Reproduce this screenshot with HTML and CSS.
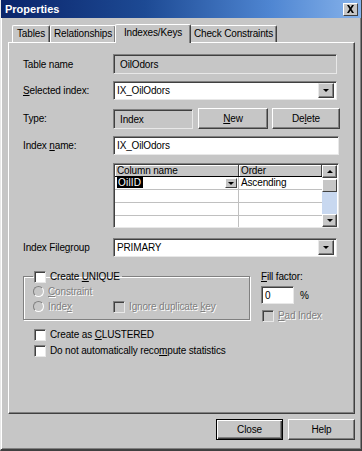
FILE: index.html
```html
<!DOCTYPE html>
<html>
<head>
<meta charset="utf-8">
<link rel="stylesheet" href="styles.css">
</head>
<body>
<div class="window">
  <div class="titlebar">
    <span class="title">Properties</span>
    <span class="tclose"><svg width="9" height="8" viewBox="0 0 9 8"><path d="M1 0h2l1.5 2.5L6 0h2L5.5 4 8 8H6L4.5 5.5 3 8H1l2.5-4z" fill="#000"/></svg></span>
  </div>
  <div class="body">
    <div class="tabs">
      <div class="tab t1">Tables</div>
      <div class="tab t2">Relationships</div>
      <div class="tab t3 active">Indexes/Keys</div>
      <div class="tab t4">Check Constraints</div>
    </div>
    <div class="panel">
      <div class="row r1">
        <div class="label">Table name</div>
        <div class="field disabled wide">OilOdors</div>
      </div>
      <div class="row r2">
        <div class="label"><u>S</u>elected index:</div>
        <div class="field combo wide"><span class="ctext">IX_OilOdors</span><span class="dd"><i></i></span></div>
      </div>
      <div class="row r3">
        <div class="label">Type:</div>
        <div class="field disabled type">Index</div>
        <div class="btn new"><span><u>N</u>ew</span></div>
        <div class="btn del"><span>De<u>l</u>ete</span></div>
      </div>
      <div class="row r4">
        <div class="label">Index <u>n</u>ame:</div>
        <div class="field wide2">IX_OilOdors</div>
      </div>
      <div class="row r5">
        <div class="label"></div>
        <div class="grid">
          <div class="gmain">
            <div class="ghead">
              <div class="gc c1">Column name</div>
              <div class="gc c2">Order</div>
            </div>
            <div class="grow">
              <div class="gc c1"><span class="sel">OilID</span><span class="mini"><i></i></span></div>
              <div class="gc c2">Ascending</div>
            </div>
            <div class="grow"><div class="gc c1"></div><div class="gc c2"></div></div>
            <div class="grow"><div class="gc c1"></div><div class="gc c2"></div></div>
            <div class="grow last"><div class="gc c1"></div><div class="gc c2"></div></div>
          </div>
          <div class="sbar">
            <div class="sbtn up"><i></i></div>
            <div class="thumb"></div>
            <div class="track"></div>
            <div class="sbtn down"><i></i></div>
          </div>
        </div>
      </div>
      <div class="row r6">
        <div class="label">Index File<u>g</u>roup</div>
        <div class="field combo wide"><span class="ctext">PRIMARY</span><span class="dd"><i></i></span></div>
      </div>
      <div class="row r7">
        <fieldset class="group">
          <legend><span class="cb"></span><span>Create <u>U</u>NIQUE</span></legend>
          <div class="opt dis"><span class="radio"></span><span><u>C</u>onstraint</span></div>
          <div class="opt dis two"><span class="ol"><span class="radio"></span><span>Inde<u>x</u></span></span><span class="cb disbox"></span><span>Ignore duplicate <u>k</u>ey</span></div>
        </fieldset>
        <div class="fill">
          <div class="flabel"><u>F</u>ill factor:</div>
          <div class="frow"><div class="field fnum">0</div><span class="pct">%</span></div>
          <div class="opt dis pad"><span class="cb disbox"></span><span><u>P</u>ad Index</span></div>
        </div>
      </div>
      <div class="opt chk c1st"><span class="cb"></span><span>Create as <u>C</u>LUSTERED</span></div>
      <div class="opt chk"><span class="cb"></span><span>Do not automatically reco<u>m</u>pute statistics</span></div>
    </div>
    <div class="footer">
      <div class="btn fbtn def">Close</div>
      <div class="btn fbtn">Help</div>
    </div>
  </div>
</div>
</body>
</html>
```
FILE: styles.css
```css
* { box-sizing: border-box; }
html, body { margin: 0; padding: 0; }
body {
  width: 362px; height: 451px; overflow: hidden;
  background: #c6c6c6;
  font-family: "Liberation Sans", Arial, sans-serif;
  font-size: 10px; letter-spacing: -0.15px; color: #000;
}
u { text-decoration: underline; }
.window {
  width: 362px; height: 451px;
  background: #c6c6c6;
  border-left: 1px solid #e8e8e8;
  border-right: 1px solid #404040;
  border-bottom: 2px solid #404040;
  display: flex; flex-direction: column;
  box-shadow: inset 1px 0 0 #fff, inset -1px 0 0 #808080, inset 0 -1px 0 #808080;
}
.titlebar {
  height: 18px; flex: none;
  background: linear-gradient(to right, #0a246a 0%, #1d4a94 40%, #4f86d2 75%, #86b2ea 100%);
  display: flex; align-items: center; justify-content: space-between;
  padding: 0 3px 0 4px;
}
.title { color: #fff; font-weight: bold; font-size: 11px; letter-spacing: 0; }
.tclose {
  width: 15px; height: 13px; background: #c6c6c6;
  border: 1px solid; border-color: #fff #404040 #404040 #fff;
  display: flex; align-items: center; justify-content: center;
}
.body { flex: 1; display: flex; flex-direction: column; padding: 6px 6px 0 7px; }
.tabs { display: flex; height: 18px; padding-left: 4px; align-items: flex-end; }
.tab {
  height: 17px; padding: 0; line-height: 15px; text-align: center;
  border-top: 1px solid #fff; border-left: 1px solid #fff;
  border-right: 1px solid #404040;
  box-shadow: inset -1px 0 0 #808080;
  border-radius: 2px 2px 0 0;
  white-space: nowrap;
}
.t1 { width: 38px; }
.t2 { width: 66px; }
.t3 { width: 76px; }
.t4 { width: 87px; }
.tab.active {
  height: 19px; margin: 0 -1px -1px -1px; position: relative; z-index: 1;
  background: #c6c6c6; line-height: 16px;
}
.panel {
  height: 372px; flex: none;
  border: 1px solid; border-color: #fff #404040 #404040 #fff;
  box-shadow: inset -1px -1px 0 #808080;
  padding: 11px 14px 0 14px;
  display: flex; flex-direction: column;
}
.row { display: flex; align-items: center; flex: none; }
.label { width: 90px; flex: none; white-space: nowrap; }
.field {
  height: 19px; background: #fff;
  border: 1px solid; border-color: #808080 #e8e8e8 #e8e8e8 #808080;
  box-shadow: inset 1px 1px 0 #404040;
  padding: 2px 3px 0 3px; line-height: 14px; white-space: nowrap;
}
.field.disabled { background: #c6c6c6; padding-left: 6px; padding-top: 3px; }
.wide { width: 224px; }
.wide2 { width: 226px; }
.r1 .field { height: 20px; }
.r2 { margin-top: 7px; }
.r3 { margin-top: 8px; }
.r4 { margin-top: 7px; }
.r5 { margin-top: 8px; align-items: flex-start; }
.r6 { margin-top: 10px; }
.combo { display: flex; justify-content: space-between; padding: 0 2px 0 3px; align-items: center; }
.dd {
  width: 16px; height: 15px; background: #c6c6c6;
  border: 1px solid; border-color: #e8e8e8 #404040 #404040 #e8e8e8;
  box-shadow: inset -1px -1px 0 #808080;
  display: flex; align-items: center; justify-content: center;
}
.dd i, .mini i, .sbtn.down i {
  width: 0; height: 0; border-left: 3px solid transparent; border-right: 3px solid transparent;
  border-top: 3px solid #000;
}
.sbtn.up i {
  width: 0; height: 0; border-left: 3px solid transparent; border-right: 3px solid transparent;
  border-bottom: 3px solid #000;
}
.type { width: 80px; height: 20px; }
.btn {
  height: 21px; background: #c6c6c6;
  border: 1px solid; border-color: #fff #404040 #404040 #fff;
  box-shadow: inset -1px -1px 0 #808080;
  display: flex; align-items: center; justify-content: center;
  white-space: nowrap;
}
.new { width: 70px; margin-left: 5px; }
.del { width: 68px; margin-left: 4px; }
.grid {
  width: 226px; height: 65px; display: flex;
  border: 1px solid; border-color: #808080 #e8e8e8 #e8e8e8 #808080;
  box-shadow: inset 1px 1px 0 #404040;
  background: #fff; padding: 1px 1px 0 1px;
}
.gmain { flex: 1; display: flex; flex-direction: column; }
.ghead { display: flex; height: 12px; background: #c6c6c6; border-bottom: 1px solid #000; }
.ghead .gc { line-height: 11px; padding-left: 2px; border-right: 1px solid #404040; box-shadow: inset 1px 1px 0 #fff; }
.c1 { width: 124px; flex: none; }
.c2 { flex: 1; }
.grow { display: flex; height: 13px; border-bottom: 1px solid #c0c0c0; }
.grow.last { border-bottom: none; flex: 1; }
.grow .gc { border-right: 1px solid #c0c0c0; padding-left: 2px; line-height: 12px; position: relative; }
.grow .c2 { border-right: none; }
.sel { background: #000; color: #fff; padding: 0 2px 0 1px; letter-spacing: 0.2px; }
.mini {
  position: absolute; right: 1px; top: 1px;
  width: 12px; height: 10px; background: #c6c6c6;
  border: 1px solid; border-color: #fff #404040 #404040 #fff;
  display: flex; align-items: center; justify-content: center;
}
.sbar { width: 15px; display: flex; flex-direction: column; }
.sbtn {
  height: 13px; background: #c6c6c6;
  border: 1px solid; border-color: #fff #404040 #404040 #fff;
  box-shadow: inset -1px -1px 0 #808080;
  display: flex; align-items: center; justify-content: center;
}
.thumb {
  height: 13px; background: #c6c6c6; margin-top: 1px;
  border: 1px solid; border-color: #fff #404040 #404040 #fff;
}
.track { flex: 1; background: #c8d8f0; }
.r7 { margin-top: 13px; align-items: flex-start; }
.group {
  margin: 0; width: 227px; height: 50px;
  border: 1px solid #808080; box-shadow: 1px 1px 0 #fff, inset 1px 1px 0 #fff;
  padding: 0 0 0 9px;
}
legend { padding: 0 2px 0 1px; display: flex; align-items: center; height: 13px; }
.cb {
  width: 12px; height: 12px; flex: none; background: #fff; margin-right: 4px;
  border: 1px solid; border-color: #808080 #e8e8e8 #e8e8e8 #808080;
  box-shadow: inset 1px 1px 0 #404040;
  display: inline-block;
}
.cb.disbox { background: #c6c6c6; }
.opt { display: flex; align-items: center; height: 13px; white-space: nowrap; }
.dis { color: #808080; text-shadow: 1px 1px 0 #fff; }
.group .opt { margin-top: 2px; }
.radio {
  width: 11px; height: 11px; border-radius: 50%; margin-right: 4px; flex: none;
  background: #c6c6c6;
  border: 1px solid; border-color: #808080 #fff #fff #808080;
}
.ol { display: flex; align-items: center; width: 80px; }
.fill { margin-left: 11px; display: flex; flex-direction: column; }
.flabel { height: 14px; line-height: 14px; }
.frow { display: flex; align-items: center; margin-top: 2px; }
.fnum { width: 33px; height: 18px; padding-left: 3px; }
.pct { margin-left: 6px; }
.pad { margin-top: 5px; margin-left: 1px; }
.chk { margin-left: 11px; }
.c1st { margin-top: 6px; }
.chk + .chk { margin-top: 3px; }
.footer { display: flex; justify-content: flex-end; padding-top: 5px; gap: 5px; }
.fbtn { width: 67px; height: 21px; }
.fbtn.def { border: 1px solid #000; box-shadow: inset 1px 1px 0 #fff, inset -1px -1px 0 #404040, inset -2px -2px 0 #808080; }
```
